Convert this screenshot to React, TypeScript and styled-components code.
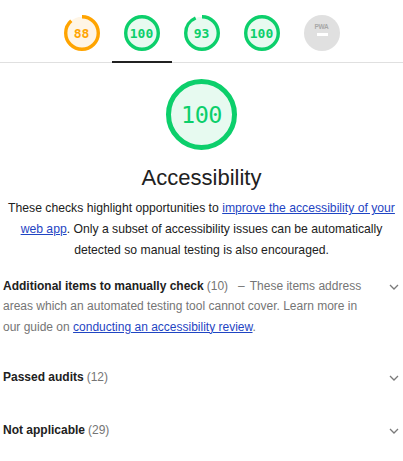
import React from "react";
import styled, { createGlobalStyle } from "styled-components";

const Global = createGlobalStyle`
  html, body { margin: 0; padding: 0; background: #fff; }
  body { font-family: "Liberation Sans", Arial, sans-serif; color: #212121; }
`;

const Page = styled.div`
  width: 403px;
  background: #fff;
`;

const Header = styled.div`
  display: flex;
  justify-content: center;
  border-bottom: 1px solid #e0e0e0;
`;

const Tab = styled.div<{ $active?: boolean }>`
  width: 60px;
  display: flex;
  justify-content: center;
  padding: 15px 0 10px;
  border-bottom: 2px solid ${(p) => (p.$active ? "#212121" : "transparent")};
  margin-bottom: -1px;
`;

const GaugeBox = styled.div<{ $size: number }>`
  position: relative;
  width: ${(p) => p.$size}px;
  height: ${(p) => p.$size}px;
  svg { display: block; }
`;

const GaugeNumber = styled.span<{ $color: string; $big?: boolean }>`
  position: absolute;
  inset: 0;
  display: flex;
  align-items: center;
  justify-content: center;
  font-family: "DejaVu Sans Mono", "Liberation Mono", monospace;
  font-size: ${(p) => (p.$big ? "23.5px" : "13px")};
  font-weight: ${(p) => (p.$big ? 400 : 700)};
  color: ${(p) => p.$color};
  letter-spacing: ${(p) => (p.$big ? "-0.5px" : "0")};
`;

const PwaLabel = styled.span`
  position: absolute;
  left: 0;
  right: 0;
  top: 8px;
  text-align: center;
  font-family: "Liberation Sans", Arial, sans-serif;
  font-size: 6.5px;
  font-weight: 700;
  color: #a8a8a8;
  letter-spacing: -0.2px;
`;

const PwaDash = styled.span`
  position: absolute;
  left: 13px;
  top: 18px;
  width: 11px;
  height: 3px;
  background: #fff;
`;

const Category = styled.section`
  display: flex;
  flex-direction: column;
  align-items: center;
  padding-top: 16px;
`;

const Title = styled.h2`
  margin: 14px 0 0;
  font-size: 22px;
  line-height: 28px;
  font-weight: 400;
  color: #212121;
`;

const Description = styled.p`
  margin: 6px 0 0;
  padding: 0 4px;
  font-size: 12.2px;
  line-height: 21px;
  text-align: center;
  color: #212121;
`;

const Link = styled.a`
  color: #1f45c3;
  text-decoration: underline;
`;

const Groups = styled.div`
  display: flex;
  flex-direction: column;
`;

const GroupRow = styled.div<{ $bottom?: number }>`
  display: flex;
  align-items: flex-start;
  gap: 12px;
  padding: 15px 4px ${(p) => p.$bottom ?? 18}px 3px;
`;

const GroupText = styled.div`
  flex: 1;
  font-size: 12px;
  line-height: 20.3px;
  color: #757575;
`;

const GroupTitle = styled.span`
  font-weight: 700;
  color: #212121;
`;

const Count = styled.span`
  color: #757575;
  margin-left: 3px;
`;

const GroupDesc = styled.span`
  margin-left: 10px;
  &::before {
    content: "–";
    margin-right: 5px;
  }
`;

const Chevron = styled.svg`
  flex: none;
  margin-top: 8px;
`;

function Gauge({
  score,
  size,
  stroke,
  color,
  fill,
  big,
}: {
  score: number;
  size: number;
  stroke: number;
  color: string;
  fill: string;
  big?: boolean;
}) {
  const r = (size - stroke) / 2;
  const c = 2 * Math.PI * r;
  return (
    <GaugeBox $size={size}>
      <svg width={size} height={size} viewBox={`0 0 ${size} ${size}`}>
        <circle cx={size / 2} cy={size / 2} r={r} fill={fill} />
        <circle
          cx={size / 2}
          cy={size / 2}
          r={r}
          fill="none"
          stroke={color}
          strokeWidth={stroke}
          strokeDasharray={`${(score / 100) * c} ${c}`}
          transform={`rotate(-90 ${size / 2} ${size / 2})`}
        />
      </svg>
      <GaugeNumber $color={color} $big={big}>
        {score}
      </GaugeNumber>
    </GaugeBox>
  );
}

function PwaGauge() {
  return (
    <GaugeBox $size={36}>
      <svg width={36} height={36} viewBox="0 0 36 36">
        <circle cx={18} cy={18} r={18} fill="#e0e0e0" />
      </svg>
      <PwaLabel>PWA</PwaLabel>
      <PwaDash />
    </GaugeBox>
  );
}

const ChevronIcon = () => (
  <Chevron width="10" height="6" viewBox="0 0 10 6">
    <path d="M1 1 L5 5 L9 1" fill="none" stroke="#7a7a7a" strokeWidth="1.3" />
  </Chevron>
);

const GREEN = "#0ccf6b";
const GREEN_FILL = "#e7faf0";
const ORANGE = "#ffa400";
const ORANGE_FILL = "#fff5e5";

export default function App() {
  return (
    <Page>
      <Global />
      <Header>
        <Tab>
          <Gauge score={88} size={36} stroke={3.4} color={ORANGE} fill={ORANGE_FILL} />
        </Tab>
        <Tab $active>
          <Gauge score={100} size={36} stroke={3.4} color={GREEN} fill={GREEN_FILL} />
        </Tab>
        <Tab>
          <Gauge score={93} size={36} stroke={3.4} color={GREEN} fill={GREEN_FILL} />
        </Tab>
        <Tab>
          <Gauge score={100} size={36} stroke={3.4} color={GREEN} fill={GREEN_FILL} />
        </Tab>
        <Tab>
          <PwaGauge />
        </Tab>
      </Header>
      <Category>
        <Gauge score={100} size={71} stroke={5} color={GREEN} fill={GREEN_FILL} big />
        <Title>Accessibility</Title>
        <Description>
          These checks highlight opportunities to{" "}
          <Link href="#">improve the accessibility of your web app</Link>. Only a subset of
          accessibility issues can be automatically detected so manual testing is also
          encouraged.
        </Description>
      </Category>
      <Groups>
        <GroupRow $bottom={15}>
          <GroupText>
            <GroupTitle>Additional items to manually check</GroupTitle>
            <Count>(10)</Count>
            <GroupDesc>
              These items address areas which an automated testing tool cannot cover. Learn
              more in our guide on{" "}
              <Link href="#">conducting an accessibility review</Link>.
            </GroupDesc>
          </GroupText>
          <ChevronIcon />
        </GroupRow>
        <GroupRow>
          <GroupText>
            <GroupTitle>Passed audits</GroupTitle>
            <Count>(12)</Count>
          </GroupText>
          <ChevronIcon />
        </GroupRow>
        <GroupRow>
          <GroupText>
            <GroupTitle>Not applicable</GroupTitle>
            <Count>(29)</Count>
          </GroupText>
          <ChevronIcon />
        </GroupRow>
      </Groups>
    </Page>
  );
}
